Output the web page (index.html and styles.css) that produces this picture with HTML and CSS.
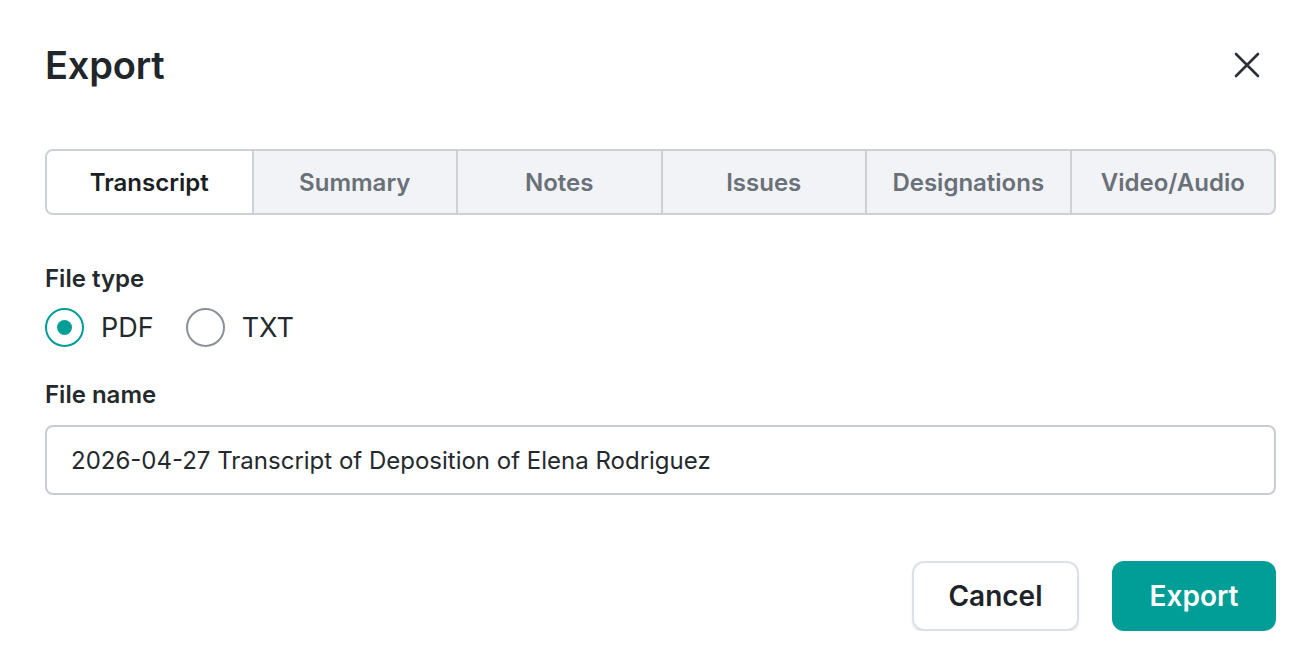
FILE: index.html
```html
<!DOCTYPE html>
<html lang="en">
<head>
<meta charset="utf-8">
<title>Export</title>
<link rel="stylesheet" href="styles.css">
</head>
<body>
<div class="dialog">
  <div class="header">
    <h1 class="title">Export</h1>
    <button class="close" aria-label="Close">
      <svg width="26" height="26" viewBox="0 0 26 26"><path d="M2 2 L24 24 M24 2 L2 24" stroke="#2b3036" stroke-width="2.6" stroke-linecap="round" fill="none"/></svg>
    </button>
  </div>
  <div class="tabs">
    <div class="tab active">Transcript</div>
    <div class="tab">Summary</div>
    <div class="tab">Notes</div>
    <div class="tab">Issues</div>
    <div class="tab">Designations</div>
    <div class="tab">Video/Audio</div>
  </div>
  <div class="label first">File type</div>
  <div class="radios">
    <label class="radio"><span class="circle checked"></span><span class="rtext">PDF</span></label>
    <label class="radio"><span class="circle"></span><span class="rtext">TXT</span></label>
  </div>
  <div class="label second">File name</div>
  <div class="input">2026-04-27 Transcript of Deposition of Elena Rodriguez</div>
  <div class="actions">
    <button class="btn cancel">Cancel</button>
    <button class="btn primary">Export</button>
  </div>
</div>
</body>
</html>
```
FILE: styles.css
```css
* { box-sizing: border-box; }
body {
  margin: 0;
  background: #fff;
  font-family: Inter, "Noto Sans", "Liberation Sans", sans-serif;
  color: #1f2328;
}
.dialog {
  width: 1314px;
  padding: 35px 38px 0 45px;
}
.header {
  display: flex;
  justify-content: space-between;
  align-items: center;
  height: 60px;
}
.title {
  margin: 0;
  font-size: 38px;
  font-weight: 600;
  line-height: 60px;
  color: #21262b;
  letter-spacing: -0.2px;
}
.close {
  border: 0;
  background: none;
  padding: 0;
  width: 26px;
  height: 26px;
  margin-right: 16px;
  display: flex;
}
.tabs {
  margin-top: 54px;
  display: grid;
  grid-template-columns: repeat(6, 1fr);
  height: 66px;
  border: 2px solid #cdd0d5;
  border-radius: 8px;
  overflow: hidden;
  background: #f1f3f6;
}
.tab {
  display: flex;
  align-items: center;
  justify-content: center;
  font-size: 24px;
  font-weight: 600;
  color: #6a7078;
  border-left: 2px solid #cdd0d5;
}
.tab:first-child { border-left: 0; }
.tab.active {
  background: #fff;
  color: #1b1f24;
}
.label {
  font-size: 24px;
  font-weight: 600;
  line-height: 30px;
  color: #24292e;
}
.label.first { margin-top: 49px; }
.label.second { margin-top: 33px; }
.radios {
  margin-top: 13px;
  display: flex;
  gap: 32px;
  height: 40px;
  align-items: center;
}
.radio {
  display: flex;
  align-items: center;
  gap: 17px;
}
.circle {
  width: 39px;
  height: 39px;
  border-radius: 50%;
  border: 2px solid #8c9098;
  display: flex;
  align-items: center;
  justify-content: center;
}
.circle.checked { border-color: #009e96; }
.circle.checked::after {
  content: "";
  width: 15px;
  height: 15px;
  border-radius: 50%;
  background: #009e96;
}
.rtext {
  font-size: 27px;
  color: #24292e;
}
.input {
  margin-top: 15px;
  height: 70px;
  border: 2px solid #c9ccd2;
  border-radius: 8px;
  padding: 0 24px;
  display: flex;
  align-items: center;
  font-size: 24px;
  color: #24292e;
}
.actions {
  margin-top: 66px;
  display: flex;
  justify-content: flex-end;
  gap: 33px;
}
.btn {
  height: 70px;
  border-radius: 12px;
  font-family: inherit;
  font-size: 28px;
  font-weight: 600;
}
.cancel {
  width: 167px;
  background: #fff;
  border: 2px solid #dde0e5;
  color: #1f2328;
  box-shadow: 0 2px 3px rgba(0,0,0,0.08);
}
.primary {
  width: 164px;
  background: #009e96;
  border: 0;
  color: #fff;
}
```
